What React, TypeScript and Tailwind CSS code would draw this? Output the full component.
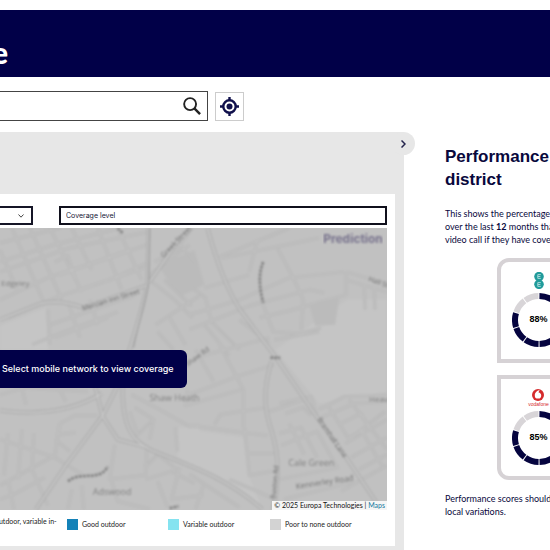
const arial = "font-['Liberation_Sans',Arial,sans-serif]";

const minorRoads = [
  "M0 243 L60 228", "M0 262 L50 246 L120 228", "M0 300 L50 277 L110 258 L150 244", "M8 318 L60 296 L110 280 L150 262",
  "M0 272 L70 248 L148 232", "M12 228 L45 305", "M30 228 L62 300", "M50 228 L82 292", "M72 228 L92 270", "M0 250 L18 292",
  "M98 228 L122 290", "M118 228 L142 280", "M55 262 L68 256 L76 280", "M60 275 L130 250", "M80 290 L145 268", "M48 310 L50 345",
  "M50 325 L110 304 L135 296", "M55 338 L108 318", "M32 345 L60 334 L118 312", "M68 302 L80 338", "M90 300 L98 325",
  "M150 280 L175 300 L193 318", "M155 262 L178 250 L192 228", "M165 280 L192 306", "M150 275 L190 245", "M156 325 L200 296",
  "M158 332 L174 350", "M170 318 L186 345", "M176 240 L197 264", "M190 315 L240 300 L290 278 L345 272",
  "M190 330 L250 306 L310 290 L325 293", "M205 288 L250 275", "M220 257 L290 228", "M222 258 L262 250 L320 238",
  "M278 248 L294 278 L304 300 L302 330", "M258 240 L250 272", "M260 318 L290 311 L347 295", "M347 272 L347 296",
  "M347 272 L388 284", "M347 280 L388 292", "M365 285 L366 310", "M375 288 L376 310", "M190 286 L206 298 L212 322 L240 350",
  "M205 325 L230 356", "M262 300 L274 332 L300 334 L322 328", "M275 340 L320 332", "M196 358 L270 338", "M240 320 L270 344",
  "M190 395 L240 376 L275 365", "M196 350 L214 382", "M220 345 L244 390 L244 428", "M215 425 L221 415 L268 408",
  "M190 426 L268 436", "M245 428 L250 476 L278 471", "M248 454 L276 454", "M280 404 L312 397 L318 418", "M286 414 L304 408 L312 416",
  "M280 434 L302 428 L318 458", "M282 446 L318 432 L338 468", "M290 424 L305 455", "M280 480 L340 468", "M285 500 L356 482",
  "M320 410 L345 397 L388 396", "M322 418 L355 404 L388 402", "M328 405 L350 440 L386 412", "M340 425 L362 414 L370 428 L350 438",
  "M346 444 L388 420", "M352 458 L388 438", "M360 470 L388 455", "M362 430 L384 468", "M342 492 L388 466", "M350 400 L388 450",
  "M0 440 L55 458 L82 475", "M8 434 L4 476", "M22 430 L18 480", "M34 434 L32 470 L48 506", "M0 486 L55 456 L60 424",
  "M60 424 L75 416 L98 416", "M60 424 L58 435 L76 433", "M55 440 L70 452", "M14 510 L8 480", "M0 500 L16 494 L45 478",
  "M115 445 L110 480 L146 476 L147 450", "M130 412 L138 435 L154 420 L135 408", "M132 395 L160 410 L190 427 L200 426",
  "M154 420 L150 440", "M176 428 L178 452", "M145 468 L158 455 L180 472", "M146 480 L172 472 L195 484", "M158 482 L168 508",
  "M180 468 L172 500 L204 496", "M190 475 L240 508", "M204 486 L196 510", "M72 490 L68 510", "M82 486 L84 510",
  "M0 395 L25 388 L88 392", "M22 388 L26 405", "M0 378 L60 373 L90 380", "M60 390 L66 402", "M112 482 L118 502 L150 510",
  "M188 390 L186 406 L242 390", "M270 412 L305 400", "M230 480 L276 500",
];
const mainRoads = [
  "M208 228 C216 258 228 290 240 309 L276 357 L318 418 L345 455 L382 510",
  "M272 362 C264 390 264 408 273 434 C281 460 279 486 274 510",
  "M149 228 L148 282 C145 305 134 336 120 382 L103 416 L66 466 L36 510",
  "M123 385 C122 428 133 442 152 451 C188 466 224 476 263 510",
  "M0 411 C38 416 72 412 102 394",
  "M90 365 L103 417 L118 440 L148 448",
  "M0 320 L40 304 Q58 299 84 308 L146 286",
  "M150 282 L178 242 L192 228",
];

function PlaceLabels() {
  return (
    <g fill="#7c7c7c" fontFamily="'Open Sans','Noto Sans',sans-serif" fontSize="8">
      <text x="1" y="286">Edgeley</text>
      <text x="150" y="401" fontSize="9">Shaw Heath</text>
      <text x="93" y="496" fontSize="9">Adswood</text>
      <text x="289" y="467" fontSize="9">Cale Green</text>
      <text x="370" y="402">Heaviley</text>
      <g fill="#6c6c6c" fontSize="7">
        <text transform="translate(83 311) rotate(-17)">Mercian Inn Street</text>
        <text transform="translate(164 258) rotate(-46)">Greek Street</text>
        <text transform="translate(297 490) rotate(-9)" fontSize="8">Kennerley Road</text>
        <text transform="translate(318 420) rotate(56)">Bramhall Lane</text>
        <text transform="translate(276 500) rotate(-84)">Buxton Rd</text>
        <text transform="translate(188 367) rotate(-36)">Shaw Rd</text>
        <text transform="translate(369 281) rotate(20)">Hall St</text>
      </g>
      <g fill="none" stroke="#868686" strokeWidth="3" strokeDasharray="3 1">
        <path d="M264 262 Q257 278 264 303" />
        <path d="M68 482 C82 471 100 483 108 467" />
        <path d="M118 228 L123 233 M170 509 L179 507 M271 358 L281 358" />
      </g>
    </g>
  );
}

function CoverageMap() {
  return (
    <svg className="block w-full" viewBox="0 228 388 283" role="img" aria-label="Coverage map">
      <defs>
        <filter id="soft" x="0" y="0" width="1" height="1">
          <feGaussianBlur stdDeviation="0.9" />
        </filter>
      </defs>
      <rect y="228" width="388" height="283" fill="#c1c1c1" />
      <g filter="url(#soft)">
        <rect x="-5" y="220" width="400" height="300" fill="#c1c1c1" />
        <path d="M0 326 L46 308 L48 350 L0 350Z M276 350 L348 300 L388 300 V392 L320 404Z M190 430 L244 438 L250 478 L262 508 Q230 480 190 466Z M178 428 L200 428 V470 L178 458Z" fill="#c5c5c5" />
        <path d="M158 265 L195 250 L205 285 L180 297Z M310 305 L340 299 L336 325 L316 326Z" fill="#bbb" />
        <g fill="none" strokeLinejoin="round">
          {minorRoads.map((d) => <path key={d} d={d} stroke="#b6b6b6" strokeWidth="3" />)}
          {minorRoads.map((d) => <path key={d} d={d} stroke="#c5c5c5" strokeWidth="1" />)}
          {mainRoads.map((d) => <path key={d} d={d} stroke="#a9a9a9" strokeWidth="4" />)}
          {mainRoads.map((d) => <path key={d} d={d} stroke="#c6c6c6" strokeWidth="2" />)}
          <path d="M150 228 L149 282 C145 305 137 330 134 348" stroke="#999" strokeWidth="1" />
        </g>
        <PlaceLabels />
      </g>
      <text x="324" y="243" fontSize="12" fontWeight="700" fill="#77728c" fontFamily="Inter,sans-serif" filter="url(#soft)">Prediction</text>
    </svg>
  );
}

function ScoreRing({ score }: { score: number }) {
  const segments = Array.from({ length: 10 }, (_, i) => i);
  const filled = Math.floor(score / 10);
  return (
    <div className="relative size-[54px]">
      <svg viewBox="0 0 54 54" className="size-full" aria-hidden="true">
        {segments.map((i) => (
          <circle key={i} cx="27" cy="27" r="24" fill="none" stroke={i < filled ? "#05043f" : "#d8d5d8"} strokeWidth="6" pathLength="100" strokeDasharray="9.4 90.6" transform={`rotate(${i * 36 - 89} 27 27)`} />
        ))}
      </svg>
      <span className="absolute inset-0 flex items-center justify-center text-[9px] font-bold text-black">{score}%</span>
    </div>
  );
}

function EeLogo() {
  return (
    <svg className="h-[17px] w-[20px]" viewBox="0 0 20 17" role="img" aria-label="EE">
      <g fill="#219b9b"><circle cx="10" cy="4.6" r="4.8" /><circle cx="10" cy="12.3" r="4.8" /></g>
      <g fill="none" stroke="#b5e0e0" strokeWidth="0.9">
        <path d="M11.8 2.6 H8.8 V6.4 H11.8 M8.8 4.5 H11.4 M11.8 10.6 H8.8 V14.4 H11.8 M8.8 12.5 H11.4" />
      </g>
    </svg>
  );
}

function VodafoneLogo() {
  return (
    <div className="flex flex-col items-center">
      <svg className="size-3" viewBox="0 0 12 12" aria-hidden="true">
        <circle cx="6" cy="6" r="6" fill="#d52b2d" />
        <path d="M8 1 C5.4 1.2 2.8 3.5 2.8 6.4 A3.2 3.2 0 0 0 6.1 9.6 A3 3 0 0 0 9.2 6.5 C9.2 4.9 8 3.9 6.6 3.6 C6.6 2.7 7.1 1.7 8 1Z" fill="#fff" />
      </svg>
      <span className="text-[5px] leading-[6px] text-[#d52b2d]">vodafone</span>
    </div>
  );
}

function Legend() {
  return (
    <ul className="flex h-9 font-['Lato',sans-serif] text-[7px] leading-[10px] whitespace-nowrap text-[#222]">
      <li className="flex w-[67px] pt-[6px]"><span className="-ml-[5px]">outdoor, variable in-</span></li>
      <li className="flex w-[101px] items-center gap-1 pb-2"><span className="size-[11px] bg-[#1482b8]" />Good outdoor</li>
      <li className="flex w-[102px] items-center gap-1 pb-2"><span className="size-[11px] bg-[#85e3f0]" />Variable outdoor</li>
      <li className="flex items-center gap-1 pb-2"><span className="size-[11px] bg-[#d3d3d3]" />Poor to none outdoor</li>
    </ul>
  );
}

export default function App() {
  return (
    <div className={`min-h-screen overflow-hidden bg-white pt-[10px] text-[#08083c] ${arial}`}>
      <header className="flex h-[67px] items-center bg-[#010048]">
        <h1 className="-ml-2 pt-4 font-['Lato',sans-serif] text-[30px] leading-8 font-black text-white">e</h1>
      </header>

      <form className="flex items-center gap-[7px] pt-[14px] pb-[11px]">
        <div className="flex h-[30px] w-[208px] items-center border border-l-0 border-[#444]">
          <input aria-label="Search postcode" className="h-full min-w-0 flex-1 outline-none" />
          <button type="button" aria-label="Search" className="pr-1.5">
            <svg className="size-[18px]" viewBox="0 0 19 19" fill="none" stroke="#222" strokeWidth="2" aria-hidden="true">
              <circle cx="7.5" cy="7.5" r="6.3" /><path d="M12 12 L18 18" strokeWidth="2.6" />
            </svg>
          </button>
        </div>
        <button type="button" aria-label="Use my location" className="flex size-[29px] items-center justify-center border border-[#ccc]">
          <svg className="size-[19px]" viewBox="0 0 19 19" fill="none" stroke="#10104c" strokeWidth="2.4" aria-hidden="true">
            <circle cx="9.5" cy="9.5" r="6.2" /><circle cx="9.5" cy="9.5" r="3" fill="#10104c" stroke="none" />
            <path d="M9.5 0 V4 M9.5 15 V19 M0 9.5 H4 M15 9.5 H19" />
          </svg>
        </button>
      </form>

      <main className="grid grid-cols-[minmax(0,1fr)_146px]">
        <section className="relative bg-[#e7e7e7] pt-[62px] pr-[9px] pb-1">
          <button type="button" aria-label="Collapse panel" className="absolute top-0 -right-[11px] flex size-[23px] items-center justify-center rounded-full bg-[#e7e7e7]">
            <svg className="h-2 w-[5px]" viewBox="0 0 5 8" fill="none" stroke="#24244d" strokeWidth="1.5" aria-hidden="true"><path d="M0.5 0.5 L4 4 L0.5 7.5" /></svg>
          </button>
          <div className="bg-white pt-3 pr-2">
            <div className="flex items-start gap-[26px] pb-[3px]">
              <div className="relative w-[33px]">
                <select aria-label="Mobile network" className="block h-[19px] w-full appearance-none border-2 border-l-0 border-[#151526] bg-white" />
                <svg className="pointer-events-none absolute top-2 right-[9px] h-1 w-[6px]" viewBox="0 0 6 4" fill="none" stroke="#444" aria-hidden="true"><path d="M0.5 0.5 L3 3.2 L5.5 0.5" /></svg>
              </div>
              <select aria-label="Coverage level" className="block h-[19px] flex-1 appearance-none border-2 border-[#10101c] bg-white pl-[5px] font-['Inter',sans-serif] text-[7px] leading-[10px] text-[#151535]">
                <option>Coverage level</option>
              </select>
            </div>
            <div className="relative">
              <CoverageMap />
              <div className="absolute top-[122px] left-0 flex h-[38px] w-[187px] items-center rounded-r-md bg-[#010048] pl-0.5 font-['Inter',sans-serif] text-[9px] font-medium whitespace-nowrap text-white">
                Select mobile network to view coverage
              </div>
              <p className="absolute right-0 bottom-0 bg-[#f5f5f5] px-0.5 font-['Lato',sans-serif] text-[7px] leading-[9px] whitespace-nowrap text-[#111]">
                © 2025 Europa Technologies | <a href="#maps" className="text-[#16799e]">Maps</a>
              </p>
            </div>
            <Legend />
          </div>
        </section>

        <aside className="pt-[13px] pl-[41px] whitespace-nowrap">
          <h2 className="text-[17px] leading-[23px] font-bold">Performance in<br />district</h2>
          <p className="pt-4 font-['Lato',sans-serif] text-[9px] leading-[13px]">
            This shows the percentage of time<br />
            over the last <b>12</b> months that you<br />
            video call if they have coverage
          </p>
          <div className="flex flex-col gap-3 pt-[12px] pl-[52px]">
            <article className="flex h-[105px] w-[83px] flex-col items-center gap-1 rounded-t-xl border-4 border-[#d6d2d5] pt-[10px]">
              <EeLogo />
              <ScoreRing score={88} />
            </article>
            <article className="flex h-[105px] w-[83px] flex-col items-center gap-1 rounded-b-xl border-4 border-[#d6d2d5] pt-[10px]">
              <VodafoneLogo />
              <ScoreRing score={85} />
            </article>
          </div>
          <p className="pt-3 font-['Lato',sans-serif] text-[9px] leading-[13px]">Performance scores should be<br />local variations.</p>
        </aside>
      </main>
    </div>
  );
}
